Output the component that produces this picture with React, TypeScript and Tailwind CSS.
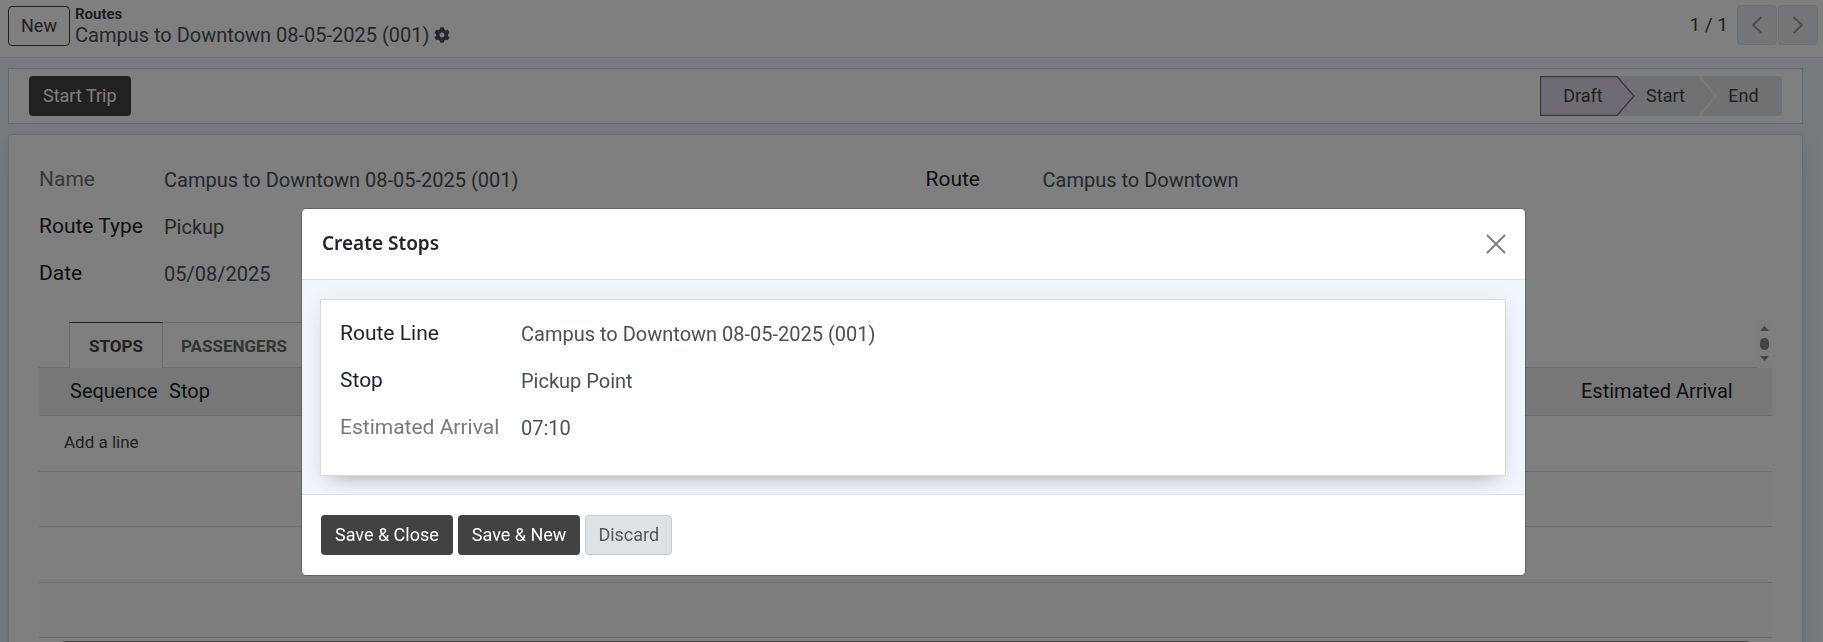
import type { ReactNode } from "react";
import { FaCog } from "react-icons/fa";

const modalFields = [
  { label: "Route Line", value: "Campus to Downtown 08-05-2025 (001)", link: true },
  { label: "Stop", value: "Pickup Point", link: true },
  { label: "Estimated Arrival", value: "07:10", muted: true },
];

const leftFields = [
  { label: "Name", value: "Campus to Downtown 08-05-2025 (001)", muted: true },
  { label: "Route Type", value: "Pickup" },
  { label: "Date", value: "05/08/2025" },
];

const Field = ({ label, value, muted }: { label: string; value: ReactNode; muted?: boolean }) => (
  <div className="flex h-[47px] items-center">
    <dt className={muted ? "text-[21px] text-[#6e7276]" : "text-[21px] text-[#1c1f22]"}>{label}</dt>
    <dd className="text-xl text-[#495057]">{value}</dd>
  </div>
);

const ControlPanel = () => (
  <header className="flex h-[58px] justify-between border-b border-[#d8dadd] bg-white pt-[5px] pr-[5px] pl-2">
    <div className="flex gap-[5px]">
      <button className="mt-px h-10 w-[62px] rounded border border-[#424242] text-lg text-[#424242]">New</button>
      <div className="flex flex-col">
        <a href="#routes" className="text-[15px] leading-[18px] font-semibold text-[#343434]">Routes</a>
        <div className="flex items-center gap-1 text-xl leading-6 text-[#495057]">
          <span>Campus to Downtown 08-05-2025 (001)</span>
          <button aria-label="Actions"><FaCog className="size-4" /></button>
        </div>
      </div>
    </div>
    <nav className="flex items-start gap-px">
      <span className="mr-2 text-[19px] leading-10 text-[#424242]">1 / 1</span>
      <button aria-label="Previous" className="flex size-10 items-center justify-center rounded border border-[#dcdfe3] bg-[#eaecf0] text-[#9a9c9f]">
        <svg viewBox="0 0 12 18" className="h-[18px] w-3" fill="none" stroke="currentColor" strokeWidth="2"><path d="M10.5 1 2 9l8.500 8" /></svg>
      </button>
      <button aria-label="Next" className="flex size-10 items-center justify-center rounded border border-[#dcdfe3] bg-[#eaecf0] text-[#9a9c9f]">
        <svg viewBox="0 0 12 18" className="h-[18px] w-3" fill="none" stroke="currentColor" strokeWidth="2"><path d="M1.500 1 10 9l-8.500 8" /></svg>
      </button>
    </nav>
  </header>
);

const StatusBar = () => (
  <div className="flex h-14 items-center justify-between border border-[#ccd5dd] bg-white pr-5 pl-5">
    <button className="h-10 rounded bg-[#424242] px-[14px] text-lg text-white">Start Trip</button>
    <div className="relative flex h-10 text-lg text-[#424242]">
      <svg viewBox="0 0 242 40" className="absolute inset-0 h-full w-full" fill="none">
        <rect width="242" height="40" rx="4" fill="#dee2e6" />
        <path d="M.5.5H77L94 20 77 39.500H.5Z" fill="#dcd9e4" stroke="#71639e" strokeWidth="1.300" />
        <path d="M159 0 176 20 159 40" stroke="#f4f4f5" strokeWidth="1.500" />
      </svg>
      <button className="relative w-[86px]">Draft</button>
      <button className="relative w-[79px]">Start</button>
      <button className="relative w-[77px]">End</button>
    </div>
  </div>
);

const Notebook = () => (
  <section className="pt-[23px]">
    <div className="flex h-12 justify-between">
      <div className="flex flex-1 items-end border-b border-[#d8dadd] pl-[30px]">
        <button className="-mb-px h-[46px] w-[94px] border border-t-[#424242] border-r-[#d8dadd] border-b-white border-l-[#d8dadd] bg-white pt-[3px] text-[17px] font-bold text-[#424242]">STOPS</button>
        <button className="h-[45px] border-t border-r border-[#d8dadd] px-[18px] pt-[3px] text-[17px] font-bold text-[#666]">PASSENGERS</button>
      </div>
      <svg viewBox="0 0 15 48" className="h-12 w-[15px]" fill="#8b8b8b">
        <rect width="15" height="48" fill="#fcfcfc" />
        <path d="M3 11 7.500 6 12 11Z" />
        <rect x="3" y="18" width="9" height="12" rx="4.500" />
        <path d="M3 36 7.500 41 12 36Z" />
      </svg>
    </div>
    <table className="w-full table-fixed border-collapse text-left">
      <thead>
        <tr className="h-[47px] border-b border-[#d8dadd] bg-[#eee] text-xl text-[#1c1f22]">
          <th className="w-[130px] pl-[31px] font-normal">Sequence</th>
          <th className="font-normal">Stop</th>
          <th className="w-[191px] font-normal">Estimated Arrival</th>
        </tr>
      </thead>
      <tbody>
        <tr className="h-14 border-b border-[#d8dadd]">
          <td colSpan={3} className="pl-[25px] text-[17px] text-[#424242]"><a href="#add">Add a line</a></td>
        </tr>
        <tr className="h-[55px] border-b border-[#d8dadd] bg-[#fcfcfc]"><td colSpan={3} /></tr>
        <tr className="h-14 border-b border-[#d8dadd]"><td colSpan={3} /></tr>
        <tr className="h-[55px] border-b border-[#d8dadd] bg-[#fcfcfc]"><td colSpan={3} /></tr>
      </tbody>
    </table>
  </section>
);

const StopsDialog = () => (
  <div className="fixed inset-0 bg-black/50 pt-[208px] pl-1">
    <div role="dialog" aria-labelledby="dialog-title" className="mx-auto w-[1225px] max-w-full overflow-hidden rounded-[5px] border border-black/20 bg-white bg-clip-padding">
      <div className="flex h-[71px] items-center justify-between border-b border-[#dee2e6] pr-[19px] pl-5">
        <h4 id="dialog-title" className="pb-[2px] font-['Noto_Sans',sans-serif] text-[19px] font-semibold text-[#212529]">Create Stops</h4>
        <button aria-label="Close" className="text-[#7f7f7f]">
          <svg viewBox="0 0 20 20" className="size-5" fill="none" stroke="currentColor" strokeWidth="2" strokeLinecap="round"><path d="m1.500 1.500 17 17m0-17-17 17" /></svg>
        </button>
      </div>
      <div className="overflow-hidden border-b border-[#dee2e6] bg-[#f0f6fb] pt-[19px] pr-[19px] pb-[18px] pl-[18px]">
        <dl className="grid h-[177px] grid-cols-[181px_1fr] content-start items-center border border-[#d8dadd] bg-white px-[19px] pt-[10px] shadow-[0_12px_18px_-12px_rgba(0,0,0,0.3),0_4px_22px_rgba(60,80,100,0.08)]">
          {modalFields.map((field) => (
            <div key={field.label} className="col-span-2 grid h-[47px] grid-cols-subgrid items-center">
              <dt className={field.muted ? "text-[21px] text-[#77797c]" : "text-[21px] text-[#212529]"}>{field.label}</dt>
              <dd className="text-xl text-[#495057]">{field.link ? <a href="#record">{field.value}</a> : field.value}</dd>
            </div>
          ))}
        </dl>
      </div>
      <footer className="flex gap-[5px] px-[19px] py-5 text-lg">
        <button className="h-10 rounded bg-[#424242] px-[14px] text-white">Save &amp; Close</button>
        <button className="h-10 rounded bg-[#424242] px-[14px] text-white">Save &amp; New</button>
        <button className="h-10 rounded border border-[#c9cbcf] bg-[#dee2e6] px-3 text-[#54575a]">Discard</button>
      </footer>
    </div>
  </div>
);

const App = () => {
  return (
    <div className="h-screen overflow-hidden bg-[#f0f6fb] font-[Roboto,sans-serif]">
      <ControlPanel />
      <main className="pt-[10px] pr-5 pl-2">
        <StatusBar />
        <div className="mt-[10px] rounded-t border border-[#d8dadd] bg-white px-[30px] pt-[21px] pb-10 shadow-[0_12px_18px_-12px_rgba(0,0,0,0.35),0_4px_22px_rgba(60,80,100,0.1)]">
          <div className="grid grid-cols-2 gap-10">
            <dl className="[&_dt]:w-[125px]">
              {leftFields.map((field) => <Field key={field.label} {...field} />)}
            </dl>
            <dl className="[&_dt]:w-[117px]">
              <Field label="Route" value={<a href="#route">Campus to Downtown</a>} />
            </dl>
          </div>
          <Notebook />
          <div className="mx-5 mt-[3px] h-3 rounded-full bg-[#8b8b8b]" />
        </div>
      </main>
      <StopsDialog />
    </div>
  );
};

export default App;
